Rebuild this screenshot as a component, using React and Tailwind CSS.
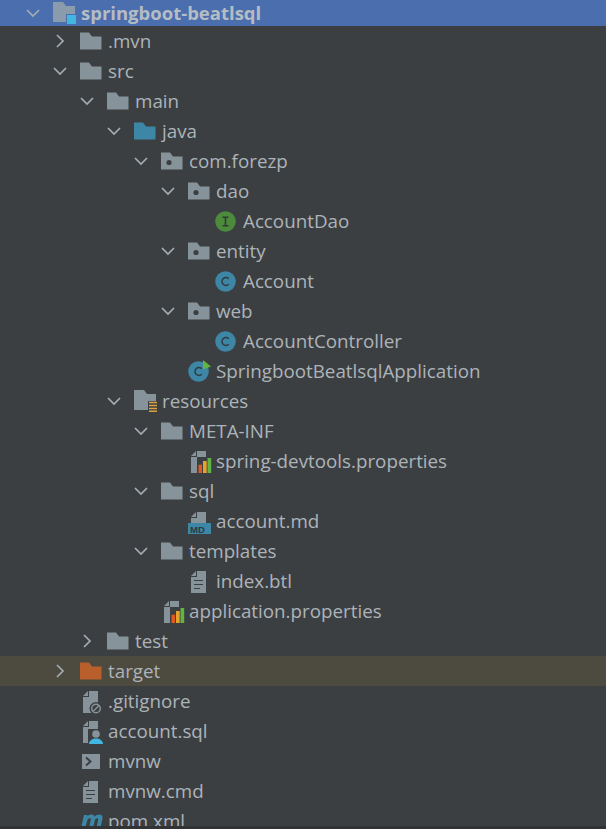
import React from 'react';

const INDENT = {
  root: 'pl-[24px]',
  0: 'pl-[51px]',
  1: 'pl-[78px]',
  2: 'pl-[105px]',
  3: 'pl-[132px]',
  4: 'pl-[159px]',
  5: 'pl-[186px]',
};

const BG = '#3c3f41';
const GREY = '#87939a';

const Chevron = ({ open }) => (
  <svg width="18" height="18" viewBox="0 0 18 18" fill="none" stroke="#a4acb2" strokeWidth="1.7">
    {open ? <path d="M3 6l6 6 6-6" /> : <path d="M6 3l6 6-6 6" />}
  </svg>
);

const Folder = ({ color = GREY, dot }) => (
  <svg width="22" height="18" viewBox="0 0 22 18">
    <path d="M0 0.5h9l3 4h9.500v13H0z" fill={color} />
    {dot && <circle cx="8" cy="10.500" r="2.600" fill={BG} />}
  </svg>
);

const RootFolder = () => (
  <svg width="24" height="22" viewBox="0 0 24 22">
    <path d="M0 0h10l3 4h9v8H13v8H0z" fill="#8a9bab" />
    <rect x="14" y="13" width="9" height="9" fill="#40b6e0" />
  </svg>
);

const ResourcesFolder = () => (
  <svg width="24" height="22" viewBox="0 0 24 22">
    <path d="M0 0h10l3 4h9v7H14v9H0z" fill={GREY} />
    <path d="M15 12.500h8M15 15.500h8M15 18.500h8M15 21.300h8" stroke="#d9a343" strokeWidth="1.500" />
  </svg>
);

const ClassIcon = ({ color = '#3d86a6', letter = 'c', run }) => (
  <svg width="24" height="24" viewBox="0 0 24 24">
    <circle cx="10.500" cy="12.500" r="10.300" fill={color} />
    {letter === 'c' && <path d="M13.800 9.700a4 4 0 1 0 0 5.600" fill="none" stroke="#2f3b42" strokeWidth="1.500" />}
    {letter === 'i' && <path d="M7.500 8.300h6M7.500 16.700h6M10.500 8.300v8.400" fill="none" stroke="#2f3b30" strokeWidth="1.600" />}
    {run && <path d="M15 1l8 6.500-8 3z" fill="#62b543" />}
  </svg>
);

// all file icons share a 24 box, sheet at x 3-18, y 2-24
const FileBase = ({ children }) => (
  <svg width="24" height="24" viewBox="0 0 24 24" className="overflow-visible">
    <path d="M3 7l5-5v5z" fill={GREY} />
    <path d="M9 2h9v22H3V8h6z" fill={GREY} />
    {children}
  </svg>
);

const TextFile = () => (
  <FileBase>
    <path d="M6 11.500h9M6 15.500h9M6 19.500h6" stroke={BG} strokeWidth="1.200" />
  </FileBase>
);

const PropsFile = () => (
  <FileBase>
    <rect x="9" y="8" width="15" height="16" fill={BG} />
    <rect x="10.500" y="15.700" width="3.500" height="8.300" fill="#e05a1c" />
    <rect x="15" y="12" width="3.700" height="12" fill="#e3a32e" />
    <rect x="19.500" y="9" width="3.700" height="15" fill="#62b543" />
  </FileBase>
);

const MdFile = () => (
  <svg width="24" height="24" viewBox="0 0 24 24" className="mt-[3px]">
    <path d="M3 6l5-5v5z" fill={GREY} />
    <path d="M9 1h9v12H3V7h6z" fill={GREY} />
    <rect x="0" y="12" width="23" height="11" fill="#3d86a6" />
    <text x="2" y="21.500" fontSize="9.500" fontWeight="700" fill="#2b3a42" fontFamily="'Liberation Sans', sans-serif">MD</text>
  </svg>
);

const IgnoreFile = () => (
  <FileBase>
    <circle cx="16" cy="19.500" r="6.500" fill={BG} />
    <circle cx="16" cy="19.500" r="4.300" fill="none" stroke={GREY} strokeWidth="1.500" />
    <path d="M13 22.500l6-6" stroke={GREY} strokeWidth="1.500" />
  </FileBase>
);

const SqlFile = () => (
  <FileBase>
    <rect x="8" y="10" width="16" height="15" fill={BG} />
    <circle cx="16" cy="15" r="3.800" fill={GREY} />
    <path d="M9 25c0-7.500 14-7.500 14 0z" fill="#40b6e0" />
  </FileBase>
);

const ShellFile = () => (
  <svg width="24" height="24" viewBox="0 0 24 24">
    <rect x="2" y="5" width="18" height="15" fill={GREY} />
    <path d="M6 8.500l4.500 4L6 16.500" fill="none" stroke={BG} strokeWidth="2" />
  </svg>
);

const PomIcon = () => (
  <svg width="24" height="16" viewBox="0 0 24 16" className="-translate-y-px">
    <path d="M1 16L4 3h3.500l-.3 1.600C8.600 3.200 10 2.600 11.500 2.600c1.600 0 2.700.8 3 2.200C16 3.300 17.500 2.600 19.200 2.600c2.600 0 3.800 1.700 3.200 4.300L20.400 16h-4l1.800-8.200c.2-1-.2-1.600-1.100-1.600-1 0-1.900.7-2.200 1.800L13 16H9l1.800-8.200c.2-1-.2-1.600-1.100-1.600-1 0-1.900.7-2.200 1.800L5 16z" fill="#3d86a6" />
  </svg>
);

const rows = [
  { level: 0, closed: true, icon: <Folder />, label: '.mvn' },
  { level: 0, open: true, icon: <Folder />, label: 'src' },
  { level: 1, open: true, icon: <Folder />, label: 'main' },
  { level: 2, open: true, icon: <Folder color="#3d86a6" />, label: 'java' },
  { level: 3, open: true, icon: <Folder dot />, label: 'com.forezp' },
  { level: 4, open: true, icon: <Folder dot />, label: 'dao' },
  { level: 5, icon: <ClassIcon color="#4c8a3c" letter="i" />, label: 'AccountDao' },
  { level: 4, open: true, icon: <Folder dot />, label: 'entity' },
  { level: 5, icon: <ClassIcon />, label: 'Account' },
  { level: 4, open: true, icon: <Folder dot />, label: 'web' },
  { level: 5, icon: <ClassIcon />, label: 'AccountController' },
  { level: 4, icon: <ClassIcon run />, label: 'SpringbootBeatlsqlApplication' },
  { level: 2, open: true, icon: <ResourcesFolder />, label: 'resources' },
  { level: 3, open: true, icon: <Folder />, label: 'META-INF' },
  { level: 4, icon: <PropsFile />, label: 'spring-devtools.properties' },
  { level: 3, open: true, icon: <Folder />, label: 'sql' },
  { level: 4, icon: <MdFile />, label: 'account.md' },
  { level: 3, open: true, icon: <Folder />, label: 'templates' },
  { level: 4, icon: <TextFile />, label: 'index.btl' },
  { level: 3, icon: <PropsFile />, label: 'application.properties' },
  { level: 1, closed: true, icon: <Folder />, label: 'test' },
  { level: 0, closed: true, icon: <Folder color="#b85f2c" />, label: 'target', excluded: true },
  { level: 0, icon: <IgnoreFile />, label: '.gitignore' },
  { level: 0, icon: <SqlFile />, label: 'account.sql' },
  { level: 0, icon: <ShellFile />, label: 'mvnw' },
  { level: 0, icon: <TextFile />, label: 'mvnw.cmd' },
  { level: 0, icon: <PomIcon />, label: 'pom.xml' },
];

const Row = ({ row }) => (
  <div className={`flex h-[30px] items-center ${INDENT[row.level]} ${row.excluded ? 'bg-[#4d4a3f]' : ''}`}>
    <span className="flex w-[29px] shrink-0 items-center">
      {row.open && <Chevron open />}
      {row.closed && <Chevron />}
    </span>
    <span className="flex w-[28px] shrink-0 items-center">{row.icon}</span>
    <span className="whitespace-nowrap">{row.label}</span>
  </div>
);

export default function App() {
  return (
    <div className="flex h-[829px] flex-col overflow-hidden bg-[#3c3f41] font-['Open_Sans','Noto_Sans',sans-serif] text-[18.8px] text-[#acb4ba]">
      <div className="h-[826px] overflow-hidden">
        <div className={`flex h-[26px] items-center bg-[#4b6eaf] ${INDENT.root}`}>
          <span className="flex w-[29px] shrink-0 items-center">
            <Chevron open />
          </span>
          <span className="flex w-[28px] shrink-0 items-center">
            <RootFolder />
          </span>
          <span className="whitespace-nowrap text-[18.5px] font-bold text-[#b5bdc4]">springboot-beatlsql</span>
        </div>
        {rows.map((row) => (
          <Row key={row.label} row={row} />
        ))}
      </div>
      <div className="h-[3px] bg-[#313335]" />
    </div>
  );
}
